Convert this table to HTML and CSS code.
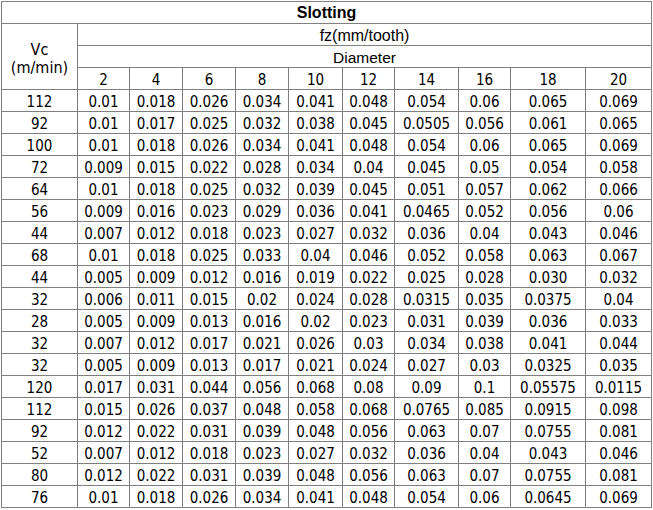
FILE: index.html
```html
<!DOCTYPE html>
<html>
<head>
<meta charset="utf-8">
<link rel="stylesheet" href="styles.css">
</head>
<body>
<table class="grid">
<colgroup>
<col class="c-vc"><col class="c52"><col class="c53"><col class="c53"><col class="c53"><col class="c54"><col class="c52"><col class="c64"><col class="c52"><col class="c75"><col class="c66">
</colgroup>
<thead>
<tr><th colspan="11" class="title">Slotting</th></tr>
<tr><td rowspan="3" class="vc">Vc<br>(m/min)</td><td colspan="10" class="sans fz">fz(mm/tooth)</td></tr>
<tr><td colspan="10" class="sans dia">Diameter</td></tr>
<tr><td>2</td><td>4</td><td>6</td><td>8</td><td>10</td><td>12</td><td>14</td><td>16</td><td>18</td><td>20</td></tr>
</thead>
<tbody>
<tr><td>112</td><td>0.01</td><td>0.018</td><td>0.026</td><td>0.034</td><td>0.041</td><td>0.048</td><td>0.054</td><td>0.06</td><td>0.065</td><td>0.069</td></tr>
<tr><td>92</td><td>0.01</td><td>0.017</td><td>0.025</td><td>0.032</td><td>0.038</td><td>0.045</td><td>0.0505</td><td>0.056</td><td>0.061</td><td>0.065</td></tr>
<tr><td>100</td><td>0.01</td><td>0.018</td><td>0.026</td><td>0.034</td><td>0.041</td><td>0.048</td><td>0.054</td><td>0.06</td><td>0.065</td><td>0.069</td></tr>
<tr><td>72</td><td>0.009</td><td>0.015</td><td>0.022</td><td>0.028</td><td>0.034</td><td>0.04</td><td>0.045</td><td>0.05</td><td>0.054</td><td>0.058</td></tr>
<tr><td>64</td><td>0.01</td><td>0.018</td><td>0.025</td><td>0.032</td><td>0.039</td><td>0.045</td><td>0.051</td><td>0.057</td><td>0.062</td><td>0.066</td></tr>
<tr><td>56</td><td>0.009</td><td>0.016</td><td>0.023</td><td>0.029</td><td>0.036</td><td>0.041</td><td>0.0465</td><td>0.052</td><td>0.056</td><td>0.06</td></tr>
<tr><td>44</td><td>0.007</td><td>0.012</td><td>0.018</td><td>0.023</td><td>0.027</td><td>0.032</td><td>0.036</td><td>0.04</td><td>0.043</td><td>0.046</td></tr>
<tr><td>68</td><td>0.01</td><td>0.018</td><td>0.025</td><td>0.033</td><td>0.04</td><td>0.046</td><td>0.052</td><td>0.058</td><td>0.063</td><td>0.067</td></tr>
<tr><td>44</td><td>0.005</td><td>0.009</td><td>0.012</td><td>0.016</td><td>0.019</td><td>0.022</td><td>0.025</td><td>0.028</td><td>0.030</td><td>0.032</td></tr>
<tr><td>32</td><td>0.006</td><td>0.011</td><td>0.015</td><td>0.02</td><td>0.024</td><td>0.028</td><td>0.0315</td><td>0.035</td><td>0.0375</td><td>0.04</td></tr>
<tr><td>28</td><td>0.005</td><td>0.009</td><td>0.013</td><td>0.016</td><td>0.02</td><td>0.023</td><td>0.031</td><td>0.039</td><td>0.036</td><td>0.033</td></tr>
<tr><td>32</td><td>0.007</td><td>0.012</td><td>0.017</td><td>0.021</td><td>0.026</td><td>0.03</td><td>0.034</td><td>0.038</td><td>0.041</td><td>0.044</td></tr>
<tr><td>32</td><td>0.005</td><td>0.009</td><td>0.013</td><td>0.017</td><td>0.021</td><td>0.024</td><td>0.027</td><td>0.03</td><td>0.0325</td><td>0.035</td></tr>
<tr><td>120</td><td>0.017</td><td>0.031</td><td>0.044</td><td>0.056</td><td>0.068</td><td>0.08</td><td>0.09</td><td>0.1</td><td>0.05575</td><td>0.0115</td></tr>
<tr><td>112</td><td>0.015</td><td>0.026</td><td>0.037</td><td>0.048</td><td>0.058</td><td>0.068</td><td>0.0765</td><td>0.085</td><td>0.0915</td><td>0.098</td></tr>
<tr><td>92</td><td>0.012</td><td>0.022</td><td>0.031</td><td>0.039</td><td>0.048</td><td>0.056</td><td>0.063</td><td>0.07</td><td>0.0755</td><td>0.081</td></tr>
<tr><td>52</td><td>0.007</td><td>0.012</td><td>0.018</td><td>0.023</td><td>0.027</td><td>0.032</td><td>0.036</td><td>0.04</td><td>0.043</td><td>0.046</td></tr>
<tr><td>80</td><td>0.012</td><td>0.022</td><td>0.031</td><td>0.039</td><td>0.048</td><td>0.056</td><td>0.063</td><td>0.07</td><td>0.0755</td><td>0.081</td></tr>
<tr><td>76</td><td>0.01</td><td>0.018</td><td>0.026</td><td>0.034</td><td>0.041</td><td>0.048</td><td>0.054</td><td>0.06</td><td>0.0645</td><td>0.069</td></tr>
</tbody>
</table>
</body>
</html>
```
FILE: styles.css
```css
html, body {
  margin: 0;
  padding: 0;
  background: #ffffff;
}
body {
  padding: 1px 0 0 1px;
}
.grid {
  border-collapse: collapse;
  table-layout: fixed;
  width: 651px;
  font-family: "DejaVu Sans Condensed", "DejaVu Sans", sans-serif;
  font-stretch: condensed;
  font-size: 15px;
  color: #000000;
}
.grid td, .grid th {
  border: 1px solid #808080;
  padding: 4px 0 0 0;
  height: 17px;
  text-align: center;
  vertical-align: top;
  line-height: 17px;
  white-space: nowrap;
}
.c-vc { width: 76px; }
.c52 { width: 52px; }
.c53 { width: 53px; }
.c54 { width: 54px; }
.c64 { width: 64px; }
.c66 { width: 66px; }
.c75 { width: 75px; }
.grid th.title {
  font-family: "Liberation Sans", Arial, sans-serif;
  font-stretch: normal;
  font-weight: bold;
  font-size: 16px;
  padding-top: 1px;
  height: 20px;
  line-height: 20px;
}
.grid td.sans {
  font-family: "Liberation Sans", Arial, sans-serif;
  font-stretch: normal;
  padding-top: 2px;
  height: 19px;
  line-height: 19px;
}
.grid td.fz { font-size: 16px; }
.grid td.dia { font-size: 15.5px; }
.grid td.vc {
  vertical-align: middle;
  font-size: 16px;
  padding-top: 4px;
  line-height: 18px;
}
```
